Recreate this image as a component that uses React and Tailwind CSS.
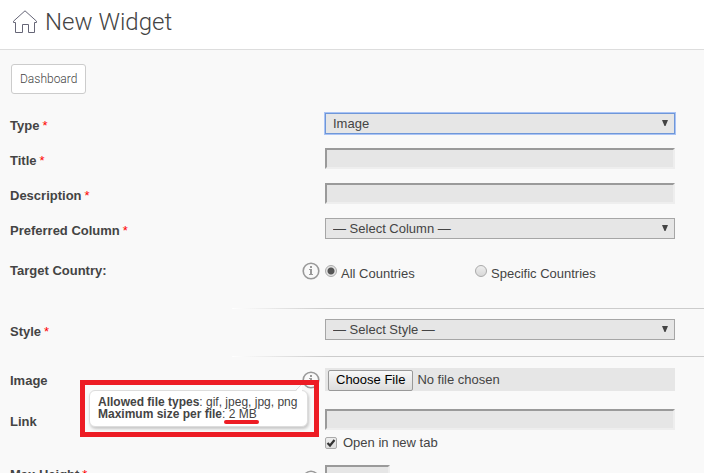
import { useState } from "react";

const fieldClass =
  "block h-[21px] w-full border-2 border-t-[#9a9a9a] border-l-[#9a9a9a] border-r-[#eeeeee] border-b-[#eeeeee] bg-[#e6e6e6] px-1 text-[13px] text-[#444] outline-none";

function Label({ htmlFor, required, children }) {
  return (
    <label htmlFor={htmlFor} className="flex w-[315px] shrink-0 gap-[3px] text-[13px] leading-[25px] font-bold text-[#444]">
      {children}
      {required && <span className="font-normal text-[#f00]">*</span>}
    </label>
  );
}

function Row({ id, label, required, children }) {
  return (
    <div className="flex h-[21px] items-start">
      <Label htmlFor={id} required={required}>{label}</Label>
      <div className="min-w-0 flex-1">{children}</div>
    </div>
  );
}

function Select({ id, text, focused }) {
  return (
    <div className="relative">
      <select
        id={id}
        className={
          focused
            ? "block h-[21px] w-full appearance-none border border-[#6f97d8] bg-[#e6e6e6] px-[7px] text-[13px] leading-[19px] text-[#444] ring-1 ring-[#a9c3f5] outline-none"
            : "block h-[21px] w-full appearance-none border border-[#a6a6a6] bg-[#e6e6e6] px-[7px] text-[13px] leading-[19px] text-[#444] outline-none"
        }
      >
        <option>{text}</option>
      </select>
      <svg className="pointer-events-none absolute top-[7px] right-[7px] h-[6px] w-[6px]" viewBox="0 0 6 6">
        <path d="M0 0H6L3.5 6H2.5Z" fill="#444" />
      </svg>
    </div>
  );
}

function InfoIcon() {
  return (
    <svg className="block h-[18px] w-[18px]" viewBox="0 0 18 18" fill="none">
      <circle cx="9" cy="9" r="7.8" stroke="#999" strokeWidth="1.6" />
      <path d="M8 4H10V6H8ZM7 7H10V12H11V13H7V12H8V8H7Z" fill="#999" />
    </svg>
  );
}

function Info({ children }) {
  return (
    <div className="relative -ml-[23px] w-[23px] shrink-0">
      <button type="button" aria-label="More information" className="block">
        <InfoIcon />
      </button>
      {children}
    </div>
  );
}

function Divider() {
  return <div className="ml-[222px] h-px bg-linear-to-r from-white via-[#ccc] via-20% to-[#ccc]" />;
}

function FileHint() {
  return (
    <div className="absolute top-[9px] right-[6px] z-10 border-5 border-[#ed1c24] pt-[5px] pr-[6px] pb-[5px] pl-[4px]">
      <div className="relative w-[219px] rounded-md border border-[#ddd] bg-white px-2 pt-[5px] pb-[6px] text-[12px] leading-3 text-[#444] shadow-[1px_2px_3px_rgba(0,0,0,0.2)]">
        <svg className="absolute -top-[6px] right-[5px] h-[7px] w-[7px]" viewBox="0 0 7 7">
          <path d="M7 0V7H0Z" fill="#fff" />
          <path d="M0 6L6 0" stroke="#ddd" />
        </svg>
        <p className="whitespace-nowrap"><b>Allowed file types</b>: gif, jpeg, jpg, png</p>
        <p className="relative whitespace-nowrap">
          <b>Maximum size per file</b>: 2 MB
          <span className="absolute top-[12px] left-[126px] h-[4px] w-[35px] rounded-full bg-[#ed1c24]" />
        </p>
      </div>
    </div>
  );
}

export default function App() {
  const [country, setCountry] = useState("all");
  const [newTab, setNewTab] = useState(true);

  const radioClass =
    "h-3 w-3 appearance-none rounded-full border border-[#aaa] bg-linear-to-b from-[#eee] to-[#d8d8d8] checked:bg-[radial-gradient(circle,#555_0_3px,#e4e4e4_4px)]";

  return (
    <div className="h-screen overflow-hidden bg-[#f9f9f9] font-['Liberation_Sans',Arial,sans-serif] text-[#444]">
      <header className="flex h-[50px] items-center gap-[7px] border-b border-[#ddd] bg-white pb-[5px] pl-[13px]">
        <svg className="h-[25px] w-[25px]" viewBox="0 0 25 25" fill="none" stroke="#666677" strokeWidth="1">
          <path d="M2.5 12.5H0.5V11.2L12 0.8L23.5 11.2V12.5H21.5V22.5H15.5V14.5H9.5V22.5H2.5Z" />
        </svg>
        <h1 className="font-[Roboto] text-2xl font-light">New Widget</h1>
      </header>

      <form className="pr-[29px] pl-[10px]" onSubmit={(e) => e.preventDefault()}>
        <button
          type="button"
          className="mt-[14px] ml-px block h-[30px] rounded-[3px] border border-[#ccc] bg-white px-2 font-[Roboto] text-[12px] font-light"
        >
          Dashboard
        </button>

        <div className="mt-[19px] flex flex-col gap-[14px]">
          <Row id="type" label="Type" required>
            <Select id="type" text="Image" focused />
          </Row>
          <Row id="title" label="Title" required>
            <input id="title" type="text" className={fieldClass} />
          </Row>
          <Row id="description" label="Description" required>
            <input id="description" type="text" className={fieldClass} />
          </Row>
          <Row id="column" label="Preferred Column" required>
            <Select id="column" text="— Select Column —" />
          </Row>
        </div>

        <fieldset className="mt-[23px] flex h-[18px] items-center text-[13px]">
          <legend className="float-left w-[315px] shrink-0 leading-[18px] font-bold">Target Country:</legend>
          <Info />
          <label className="flex w-[150px] items-center gap-1">
            <input
              type="radio"
              name="country"
              className={radioClass}
              checked={country === "all"}
              onChange={() => setCountry("all")}
            />
            <span className="pt-[6px] leading-[18px]">All Countries</span>
          </label>
          <label className="flex items-center gap-1">
            <input
              type="radio"
              name="country"
              className={radioClass}
              checked={country === "specific"}
              onChange={() => setCountry("specific")}
            />
            <span className="pt-[6px] leading-[18px]">Specific Countries</span>
          </label>
        </fieldset>

        <div className="mt-7 -mr-[29px]">
          <Divider />
        </div>

        <div className="mt-[10px]">
          <Row id="style" label="Style" required>
            <Select id="style" text="— Select Style —" />
          </Row>
        </div>

        <div className="mt-4 -mr-[29px]">
          <Divider />
        </div>

        <div className="mt-[11px] flex h-[23px] items-start">
          <Label htmlFor="image">Image</Label>
          <div className="pt-[3px]">
            <Info>
              <FileHint />
            </Info>
          </div>
          <input
            id="image"
            type="file"
            className="block h-[23px] min-w-0 flex-1 bg-[#e6e6e6] pt-px pl-[3px] text-[13px] leading-[21px] text-[#444] file:mr-1 file:h-[21px] file:rounded-[2px] file:border file:border-solid file:border-[#999] file:bg-linear-to-b file:from-[#f8f8f8] file:to-[#dddddd] file:px-[7px] file:text-[13px] file:leading-[18px] file:text-black"
          />
        </div>

        <div className="mt-[18px]">
          <Row id="link" label="Link">
            <input id="link" type="text" className={fieldClass} />
          </Row>
        </div>
        <label className="mt-1 ml-[315px] flex h-[18px] items-center gap-[6px] text-[13px]">
          <span className="relative flex">
            <input
              type="checkbox"
              className="h-3 w-3 appearance-none rounded-[2px] border border-[#aaa] bg-linear-to-b from-[#eee] to-[#ddd]"
              checked={newTab}
              onChange={(e) => setNewTab(e.target.checked)}
            />
            {newTab && (
              <svg className="pointer-events-none absolute inset-0 h-3 w-3" viewBox="0 0 12 12" fill="none">
                <path d="M2.5 6L5 8.5L9.5 3" stroke="#333" strokeWidth="2.2" />
              </svg>
            )}
          </span>
          Open in new tab
        </label>

        <div className="mt-[10px] flex items-start">
          <Label htmlFor="max-height" required>Max Height</Label>
          <div className="pt-2">
            <Info />
          </div>
          <div className="w-[65px] pt-[3px]">
            <input id="max-height" type="text" className={fieldClass} />
          </div>
        </div>
      </form>
    </div>
  );
}
